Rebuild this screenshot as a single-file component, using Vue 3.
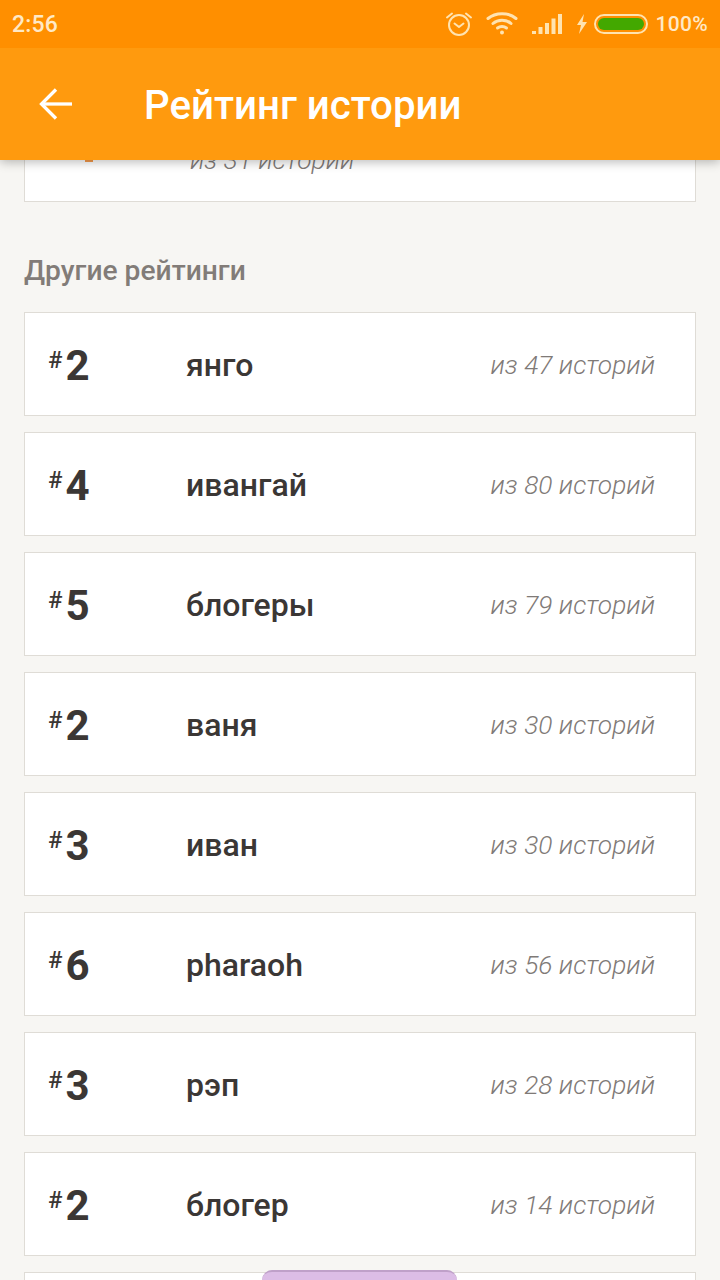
<template>
  <div class="screen">
    <header class="top">
      <div class="status">
        <span class="time">2:56</span>
        <div class="status-icons">
          <svg class="ic-alarm" width="28" height="26" viewBox="0 0 28 26" fill="none" stroke="#ffe3b0" stroke-width="2" stroke-linecap="round" stroke-linejoin="round">
            <circle cx="14" cy="14" r="10" />
            <path d="M9.500 12.500 14 16l4.500-3.500" />
            <path d="M2 6.500 7 2.500M26 6.500l-5-4" />
          </svg>
          <svg class="ic-wifi" width="32" height="24" viewBox="0 0 32 24" fill="none" stroke="#ffe3b0" stroke-width="3" stroke-linecap="round">
            <path d="M2 7.500C9.500 1 22.500 1 30 7.500" />
            <path d="M7 12.500c5-4.500 13-4.500 18 0" />
            <path d="M11.500 17c2.500-2 6.500-2 9 0" />
            <circle cx="16" cy="21.500" r="2" fill="#ffe3b0" stroke="none" />
          </svg>
          <svg class="ic-signal" width="30" height="22" viewBox="0 0 30 22" fill="#ffe3b0">
            <rect x="0" y="18" width="4" height="3" />
            <rect x="6.500" y="14" width="4" height="7" />
            <rect x="13" y="10" width="4" height="11" />
            <rect x="19.500" y="5.500" width="4" height="15.500" />
            <rect x="26" y="1" width="4" height="20" />
          </svg>
          <svg class="ic-bolt" width="12" height="20" viewBox="0 0 12 20" fill="#ffe3b0">
            <path d="M8 0 1 11h4l-2 9 8-12H6.500z" />
          </svg>
          <div class="battery"><div class="battery-fill"></div></div>
          <span class="percent">100%</span>
        </div>
      </div>
      <div class="toolbar">
        <svg class="back" width="36" height="36" viewBox="0 0 36 36" fill="none" stroke="#fff" stroke-width="3.300">
          <path d="M34 18H4" />
          <path d="M18 3.500 3.500 18 18 32.500" />
        </svg>
        <h1>Рейтинг истории</h1>
      </div>
    </header>

    <main class="content">
      <div class="card first">
        <span class="first-mark"></span>
        <span class="first-total">из 31 истории</span>
      </div>

      <h2>Другие рейтинги</h2>

      <div class="list">
        <div v-for="(r, i) in ratings" :key="i" class="card row">
          <div class="rank"><sup>#</sup><b>{{ r.rank }}</b></div>
          <div class="name">{{ r.name }}</div>
          <div class="total">из {{ r.total }} историй</div>
        </div>
        <div class="card row"></div>
      </div>
    </main>

    <div class="pill"></div>
  </div>
</template>

<script setup>
const ratings = [
  { rank: 2, name: 'янго', total: 47 },
  { rank: 4, name: 'ивангай', total: 80 },
  { rank: 5, name: 'блогеры', total: 79 },
  { rank: 2, name: 'ваня', total: 30 },
  { rank: 3, name: 'иван', total: 30 },
  { rank: 6, name: 'pharaoh', total: 56 },
  { rank: 3, name: 'рэп', total: 28 },
  { rank: 2, name: 'блогер', total: 14 },
];
</script>

<style>
html, body { margin: 0; background: #f7f6f3; }
</style>

<style scoped>
.screen {
  position: relative;
  width: 720px;
  height: 1280px;
  overflow: hidden;
  background: #f7f6f3;
  font-family: Roboto, "Noto Sans", sans-serif;
}
.top {
  position: relative;
  z-index: 2;
  box-shadow: 0 2px 10px rgba(0, 0, 0, 0.28);
}
.status {
  height: 48px;
  background: #ff8f00;
  display: flex;
  align-items: center;
  justify-content: space-between;
  padding: 0 12px;
  color: #ffe9c6;
  font-weight: 500;
  font-size: 23px;
}
.time { letter-spacing: 0.2px; }
.status-icons {
  display: flex;
  align-items: center;
}
.ic-alarm { margin-right: 13px; margin-top: -1px; }
.ic-wifi { margin-right: 14px; margin-top: -3px; }
.ic-signal { margin-right: 14px; }
.ic-bolt { margin-right: 6px; }
.battery {
  width: 54px;
  height: 20px;
  box-sizing: border-box;
  border: 2px solid #ffe3b0;
  border-radius: 10px;
  padding: 2px;
  margin-right: 8px;
}
.battery-fill {
  height: 100%;
  border-radius: 6px;
  background: #43a800;
}
.percent { font-size: 21px; letter-spacing: 0.3px; }
.toolbar {
  height: 112px;
  background: #ff9a0e;
  display: flex;
  align-items: center;
  padding-left: 38px;
  color: #fff;
}
.back { margin-right: 71px; }
h1 {
  margin: 3px 0 0 -1px;
  font-size: 40.250px;
  font-weight: 500;
}
.content {
  margin-top: -62px;
  padding: 0 24px;
}
.card {
  box-sizing: border-box;
  height: 104px;
  background: #fff;
  border: 1px solid #dfdcd6;
}
.first {
  position: relative;
  display: flex;
  align-items: flex-end;
  padding-left: 165px;
  padding-bottom: 26px;
}
.first-total {
  font-size: 26.300px;
  font-weight: 300;
  font-style: italic;
  color: #7f7a77;
}
.first-mark {
  position: absolute;
  left: 60px;
  top: 60px;
  width: 8px;
  height: 3px;
  background: #f79b4a;
}
h2 {
  margin: 54px 0 26px;
  font-size: 28.200px;
  line-height: 30px;
  font-weight: 500;
  color: #827c78;
}
.list {
  display: flex;
  flex-direction: column;
  gap: 16px;
}
.row {
  display: flex;
  align-items: center;
  padding: 2px 40px 0 24px;
  color: #3b3735;
}
.rank {
  width: 137px;
  flex: none;
  display: flex;
  align-items: flex-start;
  padding-top: 1px;
}
.rank sup {
  font-size: 24px;
  line-height: 24px;
  font-weight: 500;
  margin: 7px 3px 0 -1px;
}
.rank b {
  font-size: 42px;
  line-height: 50px;
  font-weight: 700;
}
.name {
  flex: 1;
  font-size: 32px;
  font-weight: 500;
}
.total {
  font-size: 26.300px;
  font-weight: 300;
  font-style: italic;
  color: #7f7a77;
}
.pill {
  position: absolute;
  left: 262px;
  top: 1270px;
  width: 195px;
  height: 30px;
  box-sizing: border-box;
  background: #dcbde6;
  border-top: 2px solid #bfa0c9;
  border-radius: 10px 10px 0 0;
  z-index: 1;
}
</style>
